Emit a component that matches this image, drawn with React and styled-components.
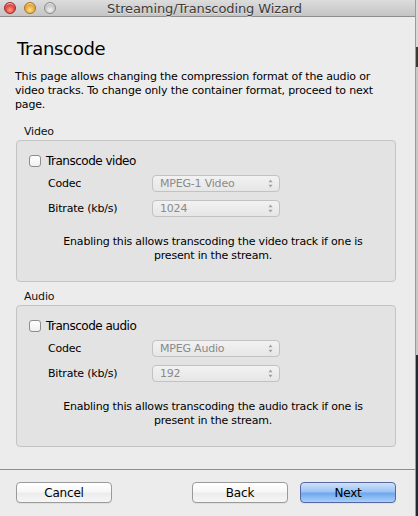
import React from "react";
import styled, { createGlobalStyle } from "styled-components";

const Global = createGlobalStyle`
  html, body { margin: 0; padding: 0; background: #3a3f44; }
  body { font-family: "DejaVu Sans", "Liberation Sans", sans-serif; }
`;

const Screen = styled.div`
  display: flex;
  width: 418px;
  height: 516px;
  overflow: hidden;
`;

const Window = styled.div`
  width: 415px;
  height: 516px;
  display: flex;
  flex-direction: column;
  background: #ececec;
  border-right: 1px solid #9a9a9a;
  flex-shrink: 0;
`;

const Desktop = styled.div`
  flex: 1;
  background: linear-gradient(#d8d8d8 0 47px, #3b3b36 47px 67px, #c8c8c8 67px 355px, #1f2a33 355px);
`;

const TitleBar = styled.div`
  height: 16px;
  position: relative;
  display: flex;
  align-items: center;
  justify-content: center;
  background: linear-gradient(#dcdcdc, #c4c4c4);
  border-bottom: 1px solid #8e8e8e;
`;

const Lights = styled.div`
  position: absolute;
  left: 4px;
  top: 2px;
  display: flex;
  gap: 8px;
`;

const Light = styled.span`
  width: 12px;
  height: 12px;
  border-radius: 50%;
  box-sizing: border-box;
  border: 1px solid ${(p) => p.$edge};
  background: radial-gradient(circle at 50% 70%, ${(p) => p.$glow} 0%, ${(p) => p.$color} 55%, ${(p) => p.$dark} 100%);
  box-shadow: inset 0 2px 1px -1px rgba(255,255,255,0.8);
`;

const Title = styled.div`
  font-size: 13px;
  color: #3c3c3c;
  letter-spacing: -0.1px;
  text-shadow: 0 1px 0 rgba(255,255,255,0.5);
  margin-right: 6px;
`;

const Content = styled.div`
  padding: 0 20px 0 16px;
  display: flex;
  flex-direction: column;
`;

const Heading = styled.h1`
  margin: 21px 0 0 1px;
  font-size: 18px;
  line-height: 22px;
  font-weight: normal;
  color: #000;
  letter-spacing: -0.3px;
`;

const Desc = styled.p`
  margin: 10px 0 0 -1px;
  font-size: 11px;
  line-height: 14px;
  color: #000;
  letter-spacing: -0.15px;
`;

const GroupLabel = styled.div`
  margin: ${(p) => p.$top}px 0 0 8px;
  font-size: 11px;
  line-height: 14px;
  color: #111;
  letter-spacing: -0.2px;
`;

const Box = styled.div`
  margin-top: 1px;
  width: 380px;
  height: 142px;
  box-sizing: border-box;
  background: #e3e3e3;
  border: 1px solid #c4c4c4;
  border-radius: 4px;
  padding: 13px 0 0 12px;
  display: flex;
  flex-direction: column;
`;

const CheckRow = styled.label`
  display: flex;
  align-items: center;
  gap: 5px;
  font-size: 12px;
  line-height: 14px;
  color: #000;
  letter-spacing: -0.5px;
`;

const Check = styled.span`
  width: 12px;
  height: 12px;
  box-sizing: border-box;
  border: 1px solid #8d8d8d;
  border-radius: 3px;
  background: linear-gradient(#ffffff, #f0f0f0);
`;

const Fields = styled.div`
  display: grid;
  grid-template-columns: 104px 128px;
  row-gap: 8px;
  margin: 7px 0 0 19px;
  align-items: center;
`;

const FieldLabel = styled.span`
  font-size: 11px;
  color: #000;
  letter-spacing: -0.2px;
`;

const Select = styled.div`
  height: 17px;
  box-sizing: border-box;
  border: 1px solid #c2c2c2;
  border-radius: 4px;
  background: linear-gradient(#f2f2f2, #e6e6e6);
  display: flex;
  align-items: center;
  justify-content: space-between;
  padding: 0 6px 0 7px;
  font-size: 11px;
  color: #8a8a8a;
  letter-spacing: -0.2px;
`;

const Arrows = styled.svg`
  width: 5px;
  height: 9px;
`;

const Help = styled.p`
  margin: 18px 0 0 -6px;
  width: 380px;
  text-align: center;
  font-size: 11px;
  line-height: 14px;
  color: #000;
  letter-spacing: -0.2px;
`;

const Separator = styled.div`
  height: 1px;
  background: #8e8e8e;
  margin-top: 22px;
`;

const Buttons = styled.div`
  display: flex;
  padding: 12px 0 0 16px;
`;

const Button = styled.button`
  width: 96px;
  height: 21px;
  box-sizing: border-box;
  margin-left: ${(p) => p.$gap || 0}px;
  border-radius: 4px;
  border: 1px solid ${(p) => (p.$primary ? "#5767a0" : "#9a9a9a")};
  background: ${(p) =>
    p.$primary
      ? "linear-gradient(#cfe2fa 0%, #9cc3f3 45%, #6fa8ee 55%, #a8d0fb 100%)"
      : "linear-gradient(#ffffff 0%, #f7f7f7 45%, #ececec 55%, #f6f6f6 100%)"};
  font-family: inherit;
  font-size: 12px;
  color: #000;
  padding: 0;
  letter-spacing: -0.2px;
  box-shadow: 0 1px 0 rgba(0,0,0,0.05);
`;

const ArrowIcon = () => (
  <Arrows viewBox="0 0 5 9">
    <path d="M2.5 0.5 L4.5 3.2 L0.5 3.2 Z M2.5 8.5 L4.5 5.8 L0.5 5.8 Z" fill="#a0a0a0" />
  </Arrows>
);

const Group = ({ top, label, check, codec, bitrate, help }) => (
  <>
    <GroupLabel $top={top}>{label}</GroupLabel>
    <Box>
      <CheckRow>
        <Check />
        {check}
      </CheckRow>
      <Fields>
        <FieldLabel>Codec</FieldLabel>
        <Select>
          {codec}
          <ArrowIcon />
        </Select>
        <FieldLabel>Bitrate (kb/s)</FieldLabel>
        <Select>
          {bitrate}
          <ArrowIcon />
        </Select>
      </Fields>
      <Help>{help}</Help>
    </Box>
  </>
);

export default function App() {
  return (
    <>
      <Global />
      <Screen>
        <Window>
          <TitleBar>
            <Lights>
              <Light $color="#e0443e" $glow="#ff9a8a" $dark="#a31d15" $edge="#9c2a22" />
              <Light $color="#e9a534" $glow="#ffe08a" $dark="#b26d0d" $edge="#a8741c" />
              <Light $color="#c8c8c8" $glow="#f2f2f2" $dark="#9a9a9a" $edge="#8c8c8c" />
            </Lights>
            <Title>Streaming/Transcoding Wizard</Title>
          </TitleBar>
          <Content>
            <Heading>Transcode</Heading>
            <Desc>
              This page allows changing the compression format of the audio or
              <br />
              video tracks. To change only the container format, proceed to next
              <br />
              page.
            </Desc>
            <Group
              top={13}
              label="Video"
              check="Transcode video"
              codec="MPEG-1 Video"
              bitrate="1024"
              help={
                <>
                  Enabling this allows transcoding the video track if one is
                  <br />
                  present in the stream.
                </>
              }
            />
            <Group
              top={8}
              label="Audio"
              check="Transcode audio"
              codec="MPEG Audio"
              bitrate="192"
              help={
                <>
                  Enabling this allows transcoding the audio track if one is
                  <br />
                  present in the stream.
                </>
              }
            />
          </Content>
          <Separator />
          <Buttons>
            <Button>Cancel</Button>
            <Button $gap={80}>Back</Button>
            <Button $gap={12} $primary>
              Next
            </Button>
          </Buttons>
        </Window>
        <Desktop />
      </Screen>
    </>
  );
}
